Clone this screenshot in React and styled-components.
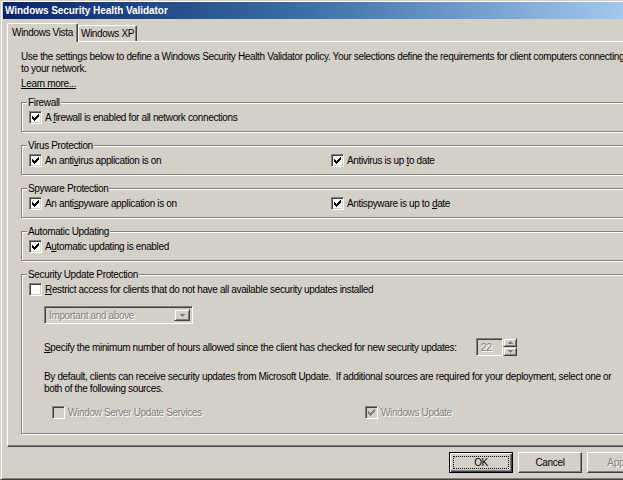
import React from 'react';
import styled, { createGlobalStyle } from 'styled-components';

const FACE = '#d4d0c8';

const Global = createGlobalStyle`
  html, body { margin: 0; padding: 0; overflow: hidden; background: ${FACE}; }
  body { width: 623px; height: 480px; }
  * { box-sizing: border-box; }
`;

const Window = styled.div`
  width: 668px;
  height: 480px;
  background: ${FACE};
  border: 1px solid;
  border-color: ${FACE} #404040 #404040 ${FACE};
  box-shadow: inset 1px 1px #fff, inset -1px -1px #808080;
  padding: 1px 2px 2px 2px;
  display: flex;
  flex-direction: column;
  font-family: "Liberation Sans", Arial, sans-serif;
  font-size: 10px;
  letter-spacing: -0.35px;
  color: #000;
`;

const TitleBar = styled.div`
  height: 17px;
  flex: none;
  background: linear-gradient(to right, #0a246a 0%, #3a6ea5 45%, #a6caf0 95%);
  color: #fff;
  font-weight: bold;
  letter-spacing: -0.05px;
  display: flex;
  align-items: center;
  padding-left: 2px;
`;

const Body = styled.div`
  flex: 1;
  display: flex;
  flex-direction: column;
  padding: 4px 4px 0 4px;
`;

const TabStrip = styled.div`
  display: flex;
  align-items: flex-end;
  height: 18px;
  padding-left: 1px;
  position: relative;
  z-index: 1;
`;

const Tab = styled.div`
  width: ${p => p.$w}px;
  height: ${p => (p.$active ? 19 : 16)}px;
  margin-bottom: ${p => (p.$active ? -1 : 0)}px;
  margin-left: ${p => (p.$active ? -1 : 0)}px;
  padding-bottom: ${p => (p.$active ? 2 : 0)}px;
  display: flex;
  align-items: center;
  justify-content: center;
  white-space: nowrap;
  background: ${FACE};
  border-top: 1px solid #fff;
  border-left: 1px solid #fff;
  border-right: 1px solid #404040;
  box-shadow: inset -1px 0 #808080;
  border-radius: 2px 2px 0 0;
`;

const Panel = styled.div`
  height: 406px;
  border: 1px solid;
  border-color: #fff #404040 #404040 #fff;
  box-shadow: inset -1px -1px #808080;
  padding: 9px 13px 0 13px;
  display: flex;
  flex-direction: column;
`;

const Para = styled.p`
  margin: 0;
  line-height: 12px;
`;

const LinkText = styled.span`
  display: inline-block;
  margin-top: 3px;
  line-height: 12px;
  text-decoration: underline;
`;

const Group = styled.fieldset`
  margin: ${p => (p.$first ? 6 : 7)}px 0 0 0;
  padding: ${p => p.$pt ?? 2}px 7px ${p => p.$pb ?? 7}px 7px;
  border: 1px solid #808080;
  box-shadow: inset 1px 1px #fff, 1px 1px #fff;
  min-width: 0;
`;

const Legend = styled.legend`
  padding: 0 1px;
  margin-left: -2px;
  line-height: 13px;
  background: ${FACE};
`;

const Row = styled.div`
  display: grid;
  grid-template-columns: ${p => p.$cols || '1fr'};
  align-items: center;
  margin-left: ${p => p.$indent || 0}px;
  margin-top: ${p => p.$mt || 0}px;
`;

const CheckLabel = styled.label`
  display: flex;
  align-items: center;
  gap: 3px;
  height: 13px;
  line-height: 13px;
  color: ${p => (p.$disabled ? '#808080' : '#000')};
  text-shadow: ${p => (p.$disabled ? '1px 1px 0 #fff' : 'none')};
  white-space: nowrap;
`;

const Box = styled.span`
  width: 13px;
  height: 13px;
  flex: none;
  border: 1px solid;
  border-color: #808080 #fff #fff #808080;
  box-shadow: inset 1px 1px #404040, inset -1px -1px ${FACE};
  background: ${p => (p.$disabled ? FACE : '#fff')};
  display: flex;
  align-items: center;
  justify-content: center;
  padding: 2px;
`;

const Check = ({ color }) => (
  <svg width="7" height="7" viewBox="0 0 7 7" shapeRendering="crispEdges">
    <path
      fill={color}
      d="M0 2h1v3H0z M1 3h1v3H1z M2 4h1v3H2z M3 3h1v3H3z M4 2h1v3H4z M5 1h1v3H5z M6 0h1v3H6z"
    />
  </svg>
);

const CheckBox = ({ checked, disabled, children }) => (
  <CheckLabel $disabled={disabled}>
    <Box $disabled={disabled}>{checked && <Check color={disabled ? '#808080' : '#000'} />}</Box>
    <span>{children}</span>
  </CheckLabel>
);

const U = styled.span`
  text-decoration: underline;
`;

const Select = styled.div`
  width: 149px;
  height: 18px;
  border: 1px solid;
  border-color: #808080 #fff #fff #808080;
  box-shadow: inset 1px 1px #404040, inset -1px -1px ${FACE};
  padding: 2px;
  display: flex;
  align-items: stretch;
  color: #808080;
  text-shadow: 1px 1px 0 #fff;
`;

const SelectText = styled.span`
  flex: 1;
  display: flex;
  align-items: center;
  padding-left: 2px;
`;

const Btn3D = styled.span`
  width: ${p => p.$w || 16}px;
  flex: ${p => (p.$fixed ? 'none' : '1')};
  background: ${FACE};
  border: 1px solid;
  border-color: ${FACE} #404040 #404040 ${FACE};
  box-shadow: inset 1px 1px #fff, inset -1px -1px #808080;
  display: flex;
  align-items: center;
  justify-content: center;
`;

const Arrow = ({ up }) => (
  <svg width="5" height="3" viewBox="0 0 5 3" shapeRendering="crispEdges">
    <path fill="#808080" d={up ? 'M2 0h1v1H2z M1 1h3v1H1z M0 2h5v1H0z' : 'M0 0h5v1H0z M1 1h3v1H1z M2 2h1v1H2z'} />
  </svg>
);

const SpecRow = styled.div`
  display: flex;
  align-items: center;
  margin-top: 14px;
  margin-left: 15px;
`;

const SpecText = styled.span`
  width: 432px;
`;

const Spin = styled.div`
  display: flex;
  height: 18px;
`;

const SpinField = styled.div`
  width: 27px;
  border: 1px solid;
  border-color: #808080 #fff #fff #808080;
  box-shadow: inset 1px 1px #404040, inset -1px -1px ${FACE};
  color: #808080;
  text-shadow: 1px 1px 0 #fff;
  display: flex;
  align-items: center;
  padding-left: 4px;
`;

const SpinButtons = styled.div`
  width: 14px;
  display: flex;
  flex-direction: column;
`;

const Note = styled.p`
  margin: 15px 0 0 15px;
  line-height: 12px;
`;

const Footer = styled.div`
  display: flex;
  gap: 5px;
  padding: 5px 0 0 442px;
`;

const Button = styled.button`
  width: 64px;
  height: 21px;
  font: inherit;
  letter-spacing: inherit;
  color: ${p => (p.disabled ? '#808080' : '#000')};
  text-shadow: ${p => (p.disabled ? '1px 1px 0 #fff' : 'none')};
  background: ${FACE};
  border: 1px solid;
  border-color: ${p => (p.$default ? '#000' : `#fff #404040 #404040 #fff`)};
  box-shadow: ${p =>
    p.$default
      ? 'inset 1px 1px #fff, inset -1px -1px #404040, inset -2px -2px #808080'
      : 'inset -1px -1px #808080'};
  padding: 0;
  position: relative;
  display: flex;
  align-items: center;
  justify-content: center;
`;

const Focus = styled.span`
  position: absolute;
  inset: 3px;
  border: 1px dotted #000;
`;

export default function App() {
  return (
    <>
      <Global />
      <Window>
        <TitleBar>Windows Security Health Validator</TitleBar>
        <Body>
          <TabStrip>
            <Tab $active $w={71}>Windows Vista</Tab>
            <Tab $w={59}>Windows XP</Tab>
          </TabStrip>
          <Panel>
            <Para>
              Use the settings below to define a Windows Security Health Validator policy. Your selections define the requirements for client computers connecting
              <br />
              to your network.
            </Para>
            <div>
              <LinkText>Learn more...</LinkText>
            </div>

            <Group $first>
              <Legend>Firewall</Legend>
              <Row>
                <CheckBox checked>A <U>f</U>irewall is enabled for all network connections</CheckBox>
              </Row>
            </Group>

            <Group>
              <Legend>Virus Protection</Legend>
              <Row $cols="302px 1fr">
                <CheckBox checked>An anti<U>v</U>irus application is on</CheckBox>
                <CheckBox checked>Antivirus is up <U>t</U>o date</CheckBox>
              </Row>
            </Group>

            <Group>
              <Legend>Spyware Protection</Legend>
              <Row $cols="302px 1fr">
                <CheckBox checked>An anti<U>s</U>pyware application is on</CheckBox>
                <CheckBox checked>Antispyware is up to <U>d</U>ate</CheckBox>
              </Row>
            </Group>

            <Group>
              <Legend>Automatic Updating</Legend>
              <Row>
                <CheckBox checked>A<U>u</U>tomatic updating is enabled</CheckBox>
              </Row>
            </Group>

            <Group $pb={14}>
              <Legend>Security Update Protection</Legend>
              <Row>
                <CheckBox><U>R</U>estrict access for clients that do not have all available security updates installed</CheckBox>
              </Row>
              <Row $indent={15} $mt={10}>
                <Select>
                  <SelectText>Important and above</SelectText>
                  <Btn3D $w={16} $fixed>
                    <Arrow />
                  </Btn3D>
                </Select>
              </Row>
              <SpecRow>
                <SpecText>
                  <U>S</U>pecify the minimum number of hours allowed since the client has checked for new security updates:
                </SpecText>
                <Spin>
                  <SpinField>22</SpinField>
                  <SpinButtons>
                    <Btn3D $w={14}><Arrow up /></Btn3D>
                    <Btn3D $w={14}><Arrow /></Btn3D>
                  </SpinButtons>
                </Spin>
              </SpecRow>
              <Note>
                By default, clients can receive security updates from Microsoft Update.&nbsp; If additional sources are required for your deployment, select one or
                <br />
                both of the following sources.
              </Note>
              <Row $cols="313px 1fr" $indent={23} $mt={11}>
                <CheckBox disabled>Window Server Update Services</CheckBox>
                <CheckBox checked disabled>Windows Update</CheckBox>
              </Row>
            </Group>
          </Panel>
          <Footer>
            <Button $default>
              OK
              <Focus />
            </Button>
            <Button>Cancel</Button>
            <Button disabled>Apply</Button>
          </Footer>
        </Body>
      </Window>
    </>
  );
}
